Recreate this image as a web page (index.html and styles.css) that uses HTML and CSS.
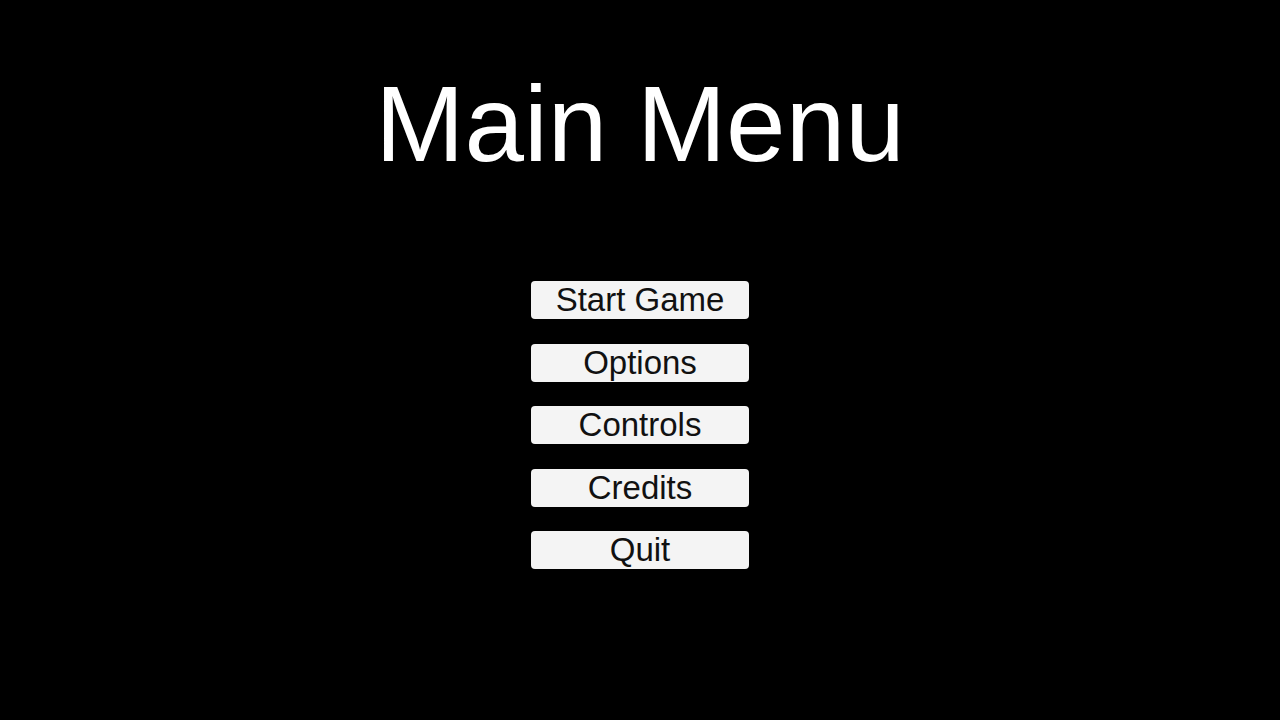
FILE: index.html
```html
<!DOCTYPE html>
<html>
<head>
<meta charset="utf-8">
<link rel="stylesheet" href="styles.css">
</head>
<body>
<main class="menu">
  <h1 class="title">Main Menu</h1>
  <nav class="buttons">
    <button class="btn">Start Game</button>
    <button class="btn">Options</button>
    <button class="btn">Controls</button>
    <button class="btn">Credits</button>
    <button class="btn">Quit</button>
  </nav>
</main>
</body>
</html>
```
FILE: styles.css
```css
html, body {
  margin: 0;
  padding: 0;
  background: #000;
  width: 1280px;
  height: 720px;
  overflow: hidden;
}
.menu {
  display: flex;
  flex-direction: column;
  align-items: center;
  padding-top: 63px;
  font-family: "Liberation Sans", Arial, sans-serif;
}
.title {
  margin: 0;
  font-size: 107px;
  font-weight: normal;
  line-height: 123px;
  color: #fff;
}
.buttons {
  margin-top: 95px;
  display: flex;
  flex-direction: column;
  align-items: center;
  gap: 24.5px;
}
.btn {
  width: 218px;
  height: 38px;
  padding: 0;
  border: none;
  border-radius: 4px;
  background: #f4f4f4;
  color: #111;
  font-family: "Liberation Sans", Arial, sans-serif;
  font-size: 33px;
  line-height: 38px;
  display: flex;
  align-items: center;
  justify-content: center;
}
```
